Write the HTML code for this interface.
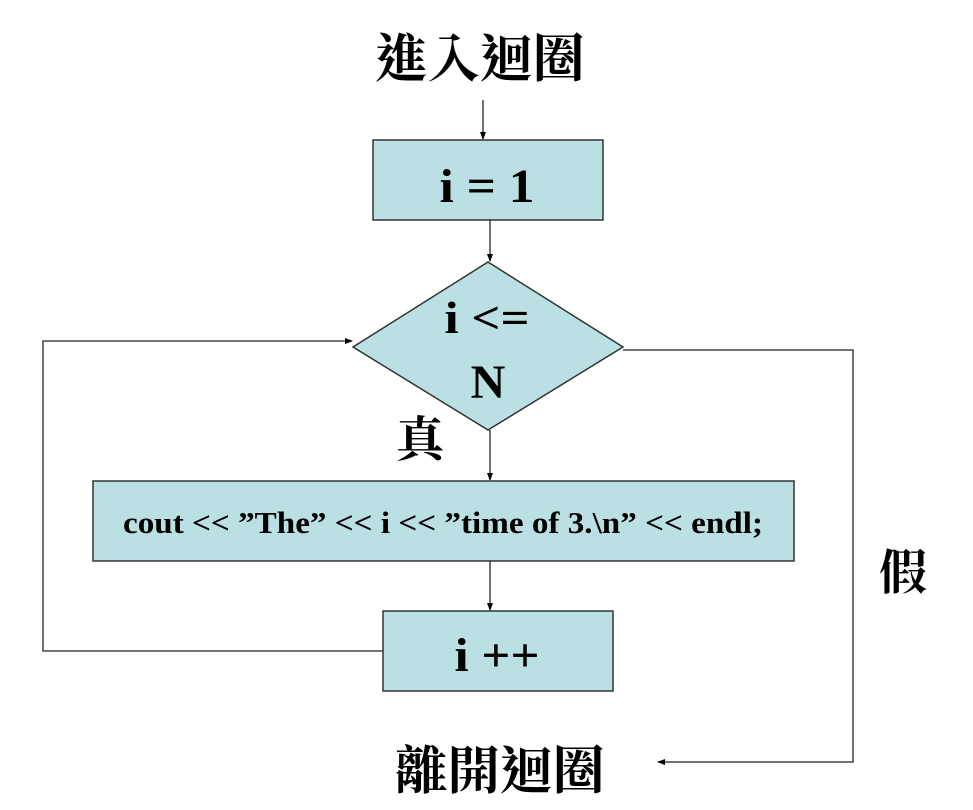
<!DOCTYPE html>
<html><head><meta charset="utf-8"><style>
body{margin:0;background:#fff;width:973px;height:810px;overflow:hidden}
svg{display:block}
.c{font-family:"Liberation Serif","Noto Serif CJK TC","Noto Serif CJK SC",serif;font-weight:bold}
</style></head><body>
<svg width="973" height="810" viewBox="0 0 973 810" xmlns="http://www.w3.org/2000/svg">
<defs><marker id="a" markerWidth="8" markerHeight="8" refX="7" refY="4" orient="auto" markerUnits="userSpaceOnUse"><path d="M0,1 L8,4 L0,7 Z" fill="#000"/></marker></defs>
<g stroke="#222" stroke-width="1.3" fill="none">
<line x1="483" y1="100" x2="483" y2="139" marker-end="url(#a)"/>
<line x1="490" y1="220" x2="490" y2="261" marker-end="url(#a)"/>
<line x1="490" y1="430" x2="490" y2="480" marker-end="url(#a)"/>
<line x1="490" y1="561" x2="490" y2="610" marker-end="url(#a)"/>
<polyline points="383,651 43,651 43,341 352,341" marker-end="url(#a)"/>
<polyline points="623,350 853,350 853,762 658,762" marker-end="url(#a)"/>
</g>
<g fill="#bbe0e3" stroke="#333" stroke-width="1.5">
<rect x="373" y="140" width="230" height="80"/>
<polygon points="488,262 623,347 488,430 353,347"/>
<rect x="93" y="481" width="701" height="80"/>
<rect x="383" y="611" width="230" height="80"/>
</g>
<g class="c" fill="#000" text-anchor="middle">
<text x="480" y="77" font-size="52" textLength="210" lengthAdjust="spacingAndGlyphs">進入迴圈</text>
<text x="487" y="202" font-size="48" textLength="95" lengthAdjust="spacingAndGlyphs">i = 1</text>
<text x="487" y="333" font-size="46" textLength="85" lengthAdjust="spacingAndGlyphs">i &lt;=</text>
<text x="488" y="398" font-size="48">N</text>
<text x="420" y="456" font-size="48">真</text>
<text x="443" y="533" font-size="31" textLength="640" lengthAdjust="spacingAndGlyphs">cout &lt;&lt; ”The” &lt;&lt; i &lt;&lt; ”time of 3.\n” &lt;&lt; endl;</text>
<text x="497" y="671" font-size="48" textLength="85" lengthAdjust="spacingAndGlyphs">i ++</text>
<text x="903" y="589" font-size="48">假</text>
<text x="500" y="789" font-size="52" textLength="210" lengthAdjust="spacingAndGlyphs">離開迴圈</text>
</g>
</svg>
</body></html>
